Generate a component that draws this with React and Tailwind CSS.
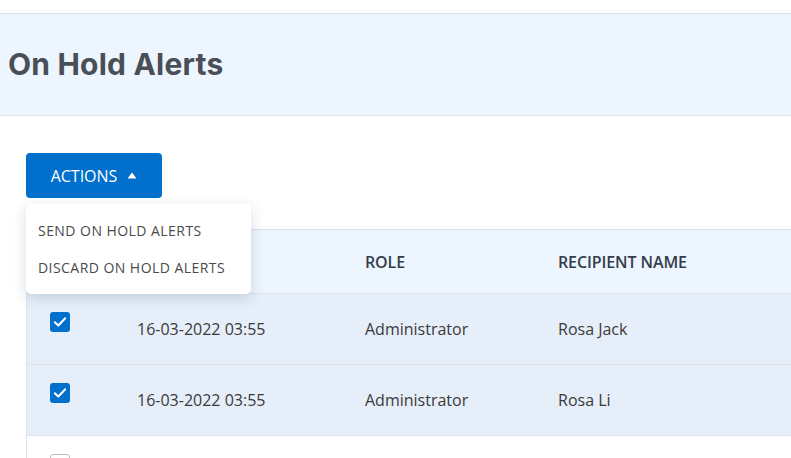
export default function App() {
  const rows = [
    { date: "16-03-2022 03:55", role: "Administrator", name: "Rosa Jack", checked: true },
    { date: "16-03-2022 03:55", role: "Administrator", name: "Rosa Li", checked: true },
    { date: "16-03-2022 03:55", role: "Administrator", name: "Rosa Lee", checked: false },
  ];
  const Check = ({ checked }) =>
    checked ? (
      <div className="w-[20px] h-[20px] rounded-[3px] bg-[#0070cc] flex items-center justify-center">
        <svg width="16" height="16" viewBox="0 0 16 16" fill="none">
          <path d="M2.8 8.2 L6.3 11.5 L13.2 4.3" stroke="white" strokeWidth="2" strokeLinecap="round" strokeLinejoin="round" />
        </svg>
      </div>
    ) : (
      <div className="w-[20px] h-[20px] rounded-[3px] bg-white border border-[#b9bec5]" />
    );
  return (
    <div className="relative w-[791px] h-[458px] overflow-hidden bg-white" style={{ fontFamily: '"Open Sans", sans-serif' }}>
      <div className="pt-[13px]">
        <div className="h-[103px] border-y border-[#dde4ec] bg-[#edf5fe] flex items-center pl-[8px]">
          <h1 className="text-[30px] font-bold text-[#4a4f57] tracking-[0.2px]" style={{ fontFamily: '"Inter", sans-serif' }}>
            On Hold Alerts
          </h1>
        </div>
      </div>
      <div className="pl-[26px]">
        <button className="mt-[37px] h-[45px] w-[136px] rounded-[4px] bg-[#0070cc] text-white text-[16px] flex items-center justify-center gap-[10px]">
          <span>ACTIONS</span>
          <svg width="10" height="7" viewBox="0 0 10 7"><path d="M5 0.5 L9.5 6.5 L0.5 6.5 Z" fill="white" /></svg>
        </button>
        <div className="mt-[31px] border-l border-t border-[#dde4ec]">
          <div className="h-[64px] bg-[#edf5fe] border-b border-[#dde4ec] flex items-center text-[16px] font-semibold text-[#333d4a] tracking-[-0.1px]">
            <div className="w-[110px]" />
            <div className="w-[228px]">DATE</div>
            <div className="w-[193px]">ROLE</div>
            <div>RECIPIENT NAME</div>
          </div>
          {rows.map((r, i) => (
            <div key={i} className={`h-[71px] flex text-[16px] text-[#3a3a3a] border-b border-[#dde4ec] ${r.checked ? "bg-[#e6eefa]" : "bg-white"}`}>
              <div className="w-[110px] pl-[23px] pt-[18px]"><Check checked={r.checked} /></div>
              <div className="w-[228px] flex items-center">{r.date}</div>
              <div className="w-[193px] flex items-center">{r.role}</div>
              <div className="flex items-center">{r.name}</div>
            </div>
          ))}
        </div>
      </div>
      <div className="absolute left-[26px] top-[204px] w-[225px] h-[90px] bg-white rounded-[5px] shadow-[0_4px_14px_rgba(40,60,90,0.18)] flex flex-col justify-center gap-[16px] pl-[12px] text-[14px] text-[#4a4a4a] tracking-[0.45px]">
        <div>SEND ON HOLD ALERTS</div>
        <div>DISCARD ON HOLD ALERTS</div>
      </div>
    </div>
  );
}
